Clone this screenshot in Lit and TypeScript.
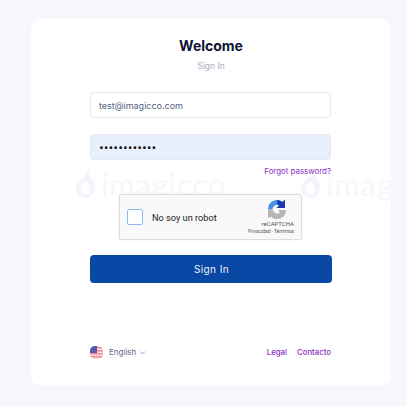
import { LitElement, html, css } from 'lit';
import { customElement } from 'lit/decorators.js';

@customElement('app-root')
export class AppRoot extends LitElement {
  static styles = css`
    :host {
      display: block;
      width: 407px;
      height: 406px;
      overflow: hidden;
      background: #f7f6fc;
      font-family: 'Inter', 'Liberation Sans', sans-serif;
      box-sizing: border-box;
      padding: 19px 16px 20px 31px;
    }

    .card {
      position: relative;
      overflow: hidden;
      box-sizing: border-box;
      height: 367px;
      background: #fff;
      border-radius: 10px;
      padding: 18px 59px 0;
      display: flex;
      flex-direction: column;
    }

    .mark {
      position: absolute;
      top: 142px;
      display: flex;
      align-items: flex-end;
      gap: 6px;
      color: #f5f7fc;
      font-family: 'Lato', 'Liberation Sans', sans-serif;
      font-size: 31px;
      line-height: 36px;
      letter-spacing: 0.8px;
      white-space: nowrap;
    }

    .mark span {
      margin-bottom: -3px;
    }

    .mark svg {
      width: 19px;
      height: 38px;
      fill: #f1f4fb;
    }

    .title {
      position: relative;
      margin: 0;
      font-size: 14px;
      line-height: 17px;
      font-weight: 700;
      text-align: center;
      color: #0c1233;
    }

    .subtitle {
      position: relative;
      margin: 6px 0 0;
      font-size: 8.5px;
      line-height: 12px;
      text-align: center;
      color: #a5adc0;
    }

    .field {
      position: relative;
      box-sizing: border-box;
      width: 241px;
      height: 26px;
      display: flex;
      align-items: center;
      padding: 0 8px;
      border: 1px solid #e5e8f4;
      border-radius: 4px;
      font-size: 9px;
      color: #56627c;
      background: #fff;
    }

    .email {
      margin-top: 20px;
    }

    .password {
      margin-top: 16px;
      background: #e8effc;
      color: #111;
      font-size: 8.5px;
    }

    .forgot {
      position: relative;
      width: 241px;
      margin-top: 5px;
      font-size: 7.9px;
      line-height: 12px;
      text-align: right;
      color: #8a2fc4;
    }

    .captcha {
      position: relative;
      box-sizing: border-box;
      width: 183px;
      height: 46px;
      margin: 17px 0 0 29px;
      display: flex;
      align-items: center;
      background: #f9f9f9;
      border: 1px solid #dcdcdc;
      border-radius: 2px;
      box-shadow: 0 0 2px rgba(0, 0, 0, 0.08);
    }

    .check {
      box-sizing: border-box;
      width: 16px;
      height: 16px;
      margin-left: 7px;
      background: #fff;
      border: 1px solid #8ab8f4;
      border-radius: 2px;
    }

    .captcha-label {
      margin-left: 9px;
      font-family: 'Roboto', 'Liberation Sans', sans-serif;
      font-size: 9.2px;
      color: #222;
    }

    .badge {
      margin-left: auto;
      margin-right: 7px;
      display: flex;
      flex-direction: column;
      align-items: flex-end;
      font-family: 'Roboto', 'Liberation Sans', sans-serif;
      color: #555;
    }

    .badge svg {
      width: 20px;
      height: 20px;
      margin-right: 7px;
    }

    .badge-name {
      margin-top: 1px;
      font-size: 6px;
      line-height: 8px;
    }

    .badge-links {
      font-size: 4.8px;
      line-height: 7px;
      white-space: nowrap;
    }

    .submit {
      position: relative;
      box-sizing: border-box;
      width: 242px;
      height: 28px;
      margin-top: 15px;
      border: none;
      border-radius: 4px;
      background: #0a48a5;
      color: #eef2fb;
      font-family: inherit;
      font-size: 10px;
      letter-spacing: 0.4px;
      padding: 0 0 0 1px;
    }

    .footer {
      width: 241px;
      margin-top: 62px;
      display: flex;
      align-items: center;
      font-size: 8px;
      line-height: 14px;
    }

    .flag {
      width: 13px;
      height: 13px;
      border-radius: 5px;
      margin-right: 6px;
      opacity: 0.9;
    }

    .lang {
      color: #5d6a85;
    }

    .chevron {
      width: 7px;
      height: 7px;
      margin-left: 3px;
      fill: none;
      stroke: #98a2b8;
      stroke-width: 1;
    }

    .links {
      margin-left: auto;
      display: flex;
      gap: 10px;
      color: #8a2fc4;
      font-size: 7.8px;
      font-weight: 500;
    }
  `;

  private _renderMark(left: number) {
    return html`
      <div class="mark" style="left: ${left}px">
        <svg viewBox="0 0 20 38">
          <path
            fill-rule="evenodd"
            d="M12 0c3 6 1 10-3 15C5 19 0 23 0 28c0 5 4 9 10 10 6-1 10-5 10-11 0-5-3-8-5-12-1-4-1-10-3-15zM10 19c-1 4-5 6-5 10 0 3 2 5 5 6 3-1 5-3 5-6 0-4-4-6-5-10z"
          />
        </svg>
        <span>imagicco</span>
      </div>
    `;
  }

  render() {
    return html`
      <div class="card">
        ${this._renderMark(45)} ${this._renderMark(270)}
        <h1 class="title">Welcome</h1>
        <p class="subtitle">Sign In</p>
        <div class="field email">test@imagicco.com</div>
        <div class="field password">••••••••••••</div>
        <div class="forgot">Forgot password?</div>
        <div class="captcha">
          <div class="check"></div>
          <span class="captcha-label">No soy un robot</span>
          <div class="badge">
            <svg viewBox="0 0 20 20">
              <path d="M1 10a9 9 0 0 1 14.5-7.1L18 .5V9h-8.5l2.6-2.6A4.5 4.5 0 0 0 5.5 10z" fill="#4a90e2" />
              <path d="M10 1a9 9 0 0 1 5.5 1.9L18 .5V9h-8.5l2.6-2.6A4.5 4.5 0 0 0 10 5.5z" fill="#1c3aa9" />
              <path d="M1 10h4.5a4.5 4.5 0 0 0 7.6 3.2L11 11h8a9 9 0 0 1-15 6.7L1 19z" fill="#b5b5b5" />
            </svg>
            <span class="badge-name">reCAPTCHA</span>
            <span class="badge-links">Privacidad - Términos</span>
          </div>
        </div>
        <button class="submit">Sign In</button>
        <div class="footer">
          <svg class="flag" viewBox="0 0 13 13">
            <rect width="13" height="13" fill="#fbd9dc" />
            <path d="M0 1h13v1.5H0zM0 4h13v1.5H0zM0 7h13v1.5H0zM0 10h13v1.5H0z" fill="#f47f88" />
            <rect width="7" height="7" fill="#45499e" />
          </svg>
          <span class="lang">English</span>
          <svg class="chevron" viewBox="0 0 7 7"><path d="M1 2.5l2.5 2.5L6 2.5" /></svg>
          <div class="links">
            <span>Legal</span>
            <span>Contacto</span>
          </div>
        </div>
      </div>
    `;
  }
}
